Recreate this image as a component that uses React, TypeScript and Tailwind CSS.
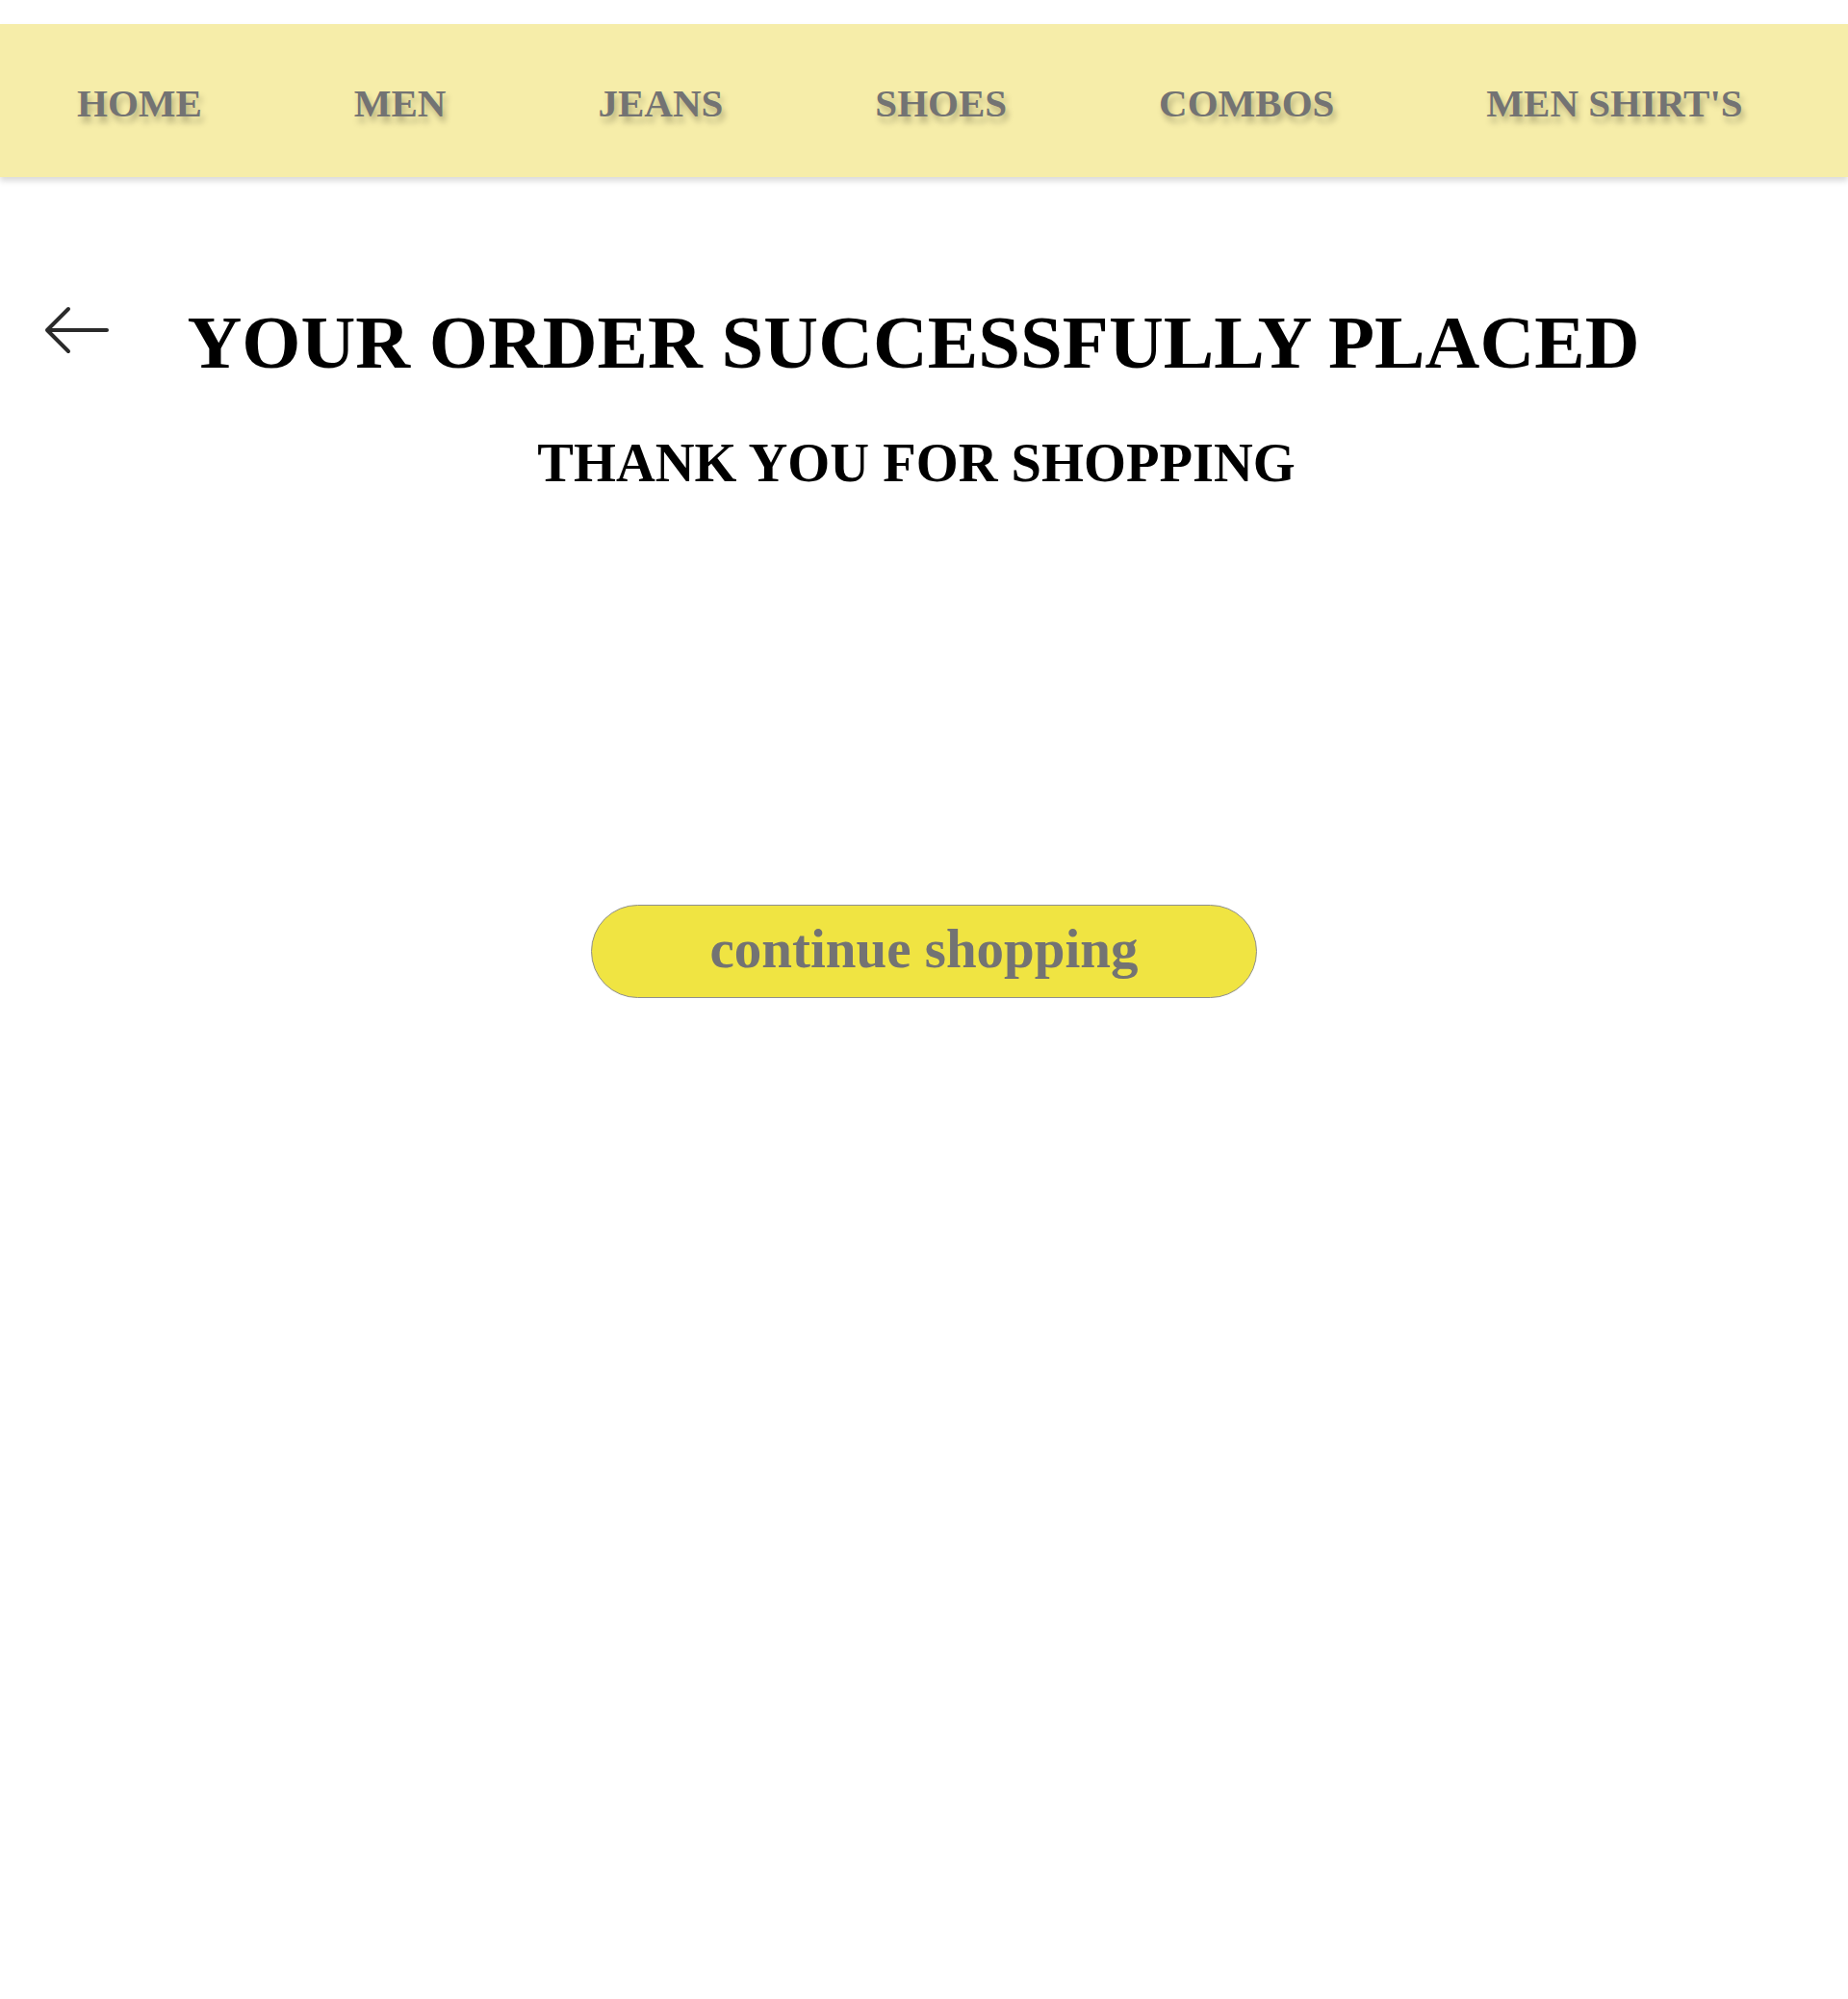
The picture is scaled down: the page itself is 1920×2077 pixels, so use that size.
import React from 'react';

const navLinks = ['HOME', 'MEN', 'JEANS', 'SHOES', 'COMBOS', "MEN SHIRT'S"];

function BackArrow() {
  return (
    <svg width="70" height="50" viewBox="0 0 70 50" fill="none" className="text-[#2a2a2a]">
      <path
        d="M67 25H5M27 3L5 25l22 22"
        stroke="currentColor"
        strokeWidth="4"
        strokeLinecap="round"
        strokeLinejoin="round"
      />
    </svg>
  );
}

export default function App() {
  return (
    <div className="min-h-screen bg-white font-['Liberation_Serif','Times_New_Roman',serif]">
      <nav className="mt-[25px] h-[159px] bg-[#f6eda9] shadow-[0_4px_6px_rgba(0,0,0,0.15)] flex items-center pl-[80px] pt-[6px] gap-[158px]">
        {navLinks.map((link) => (
          <a
            key={link}
            href="#"
            className="text-[41px] font-bold leading-none text-[#737373] [text-shadow:3px_6px_6px_rgba(0,0,0,0.25)] whitespace-nowrap"
          >
            {link}
          </a>
        ))}
      </nav>

      <main className="flex flex-col items-center">
        <div className="w-full grid grid-cols-[1fr_auto_1fr] items-center mt-[133px]">
          <button className="justify-self-start ml-[44px] -mt-[26px]">
            <BackArrow />
          </button>
          <h1 className="text-[78.7px] font-bold leading-none text-black whitespace-nowrap -translate-x-[11px]">
            YOUR ORDER SUCCESSFULLY PLACED
          </h1>
          <div />
        </div>

        <h2 className="mt-[57px] text-[56.5px] font-bold leading-none text-black -translate-x-[8px]">
          THANK YOU FOR SHOPPING
        </h2>

        <button className="mt-[431px] w-[692px] h-[97px] rounded-full bg-[#f0e442] border border-[#8f8f8f] flex items-center justify-center pb-[6px] text-[57px] font-bold leading-none text-[#737373]">
          continue shopping
        </button>
      </main>
    </div>
  );
}
